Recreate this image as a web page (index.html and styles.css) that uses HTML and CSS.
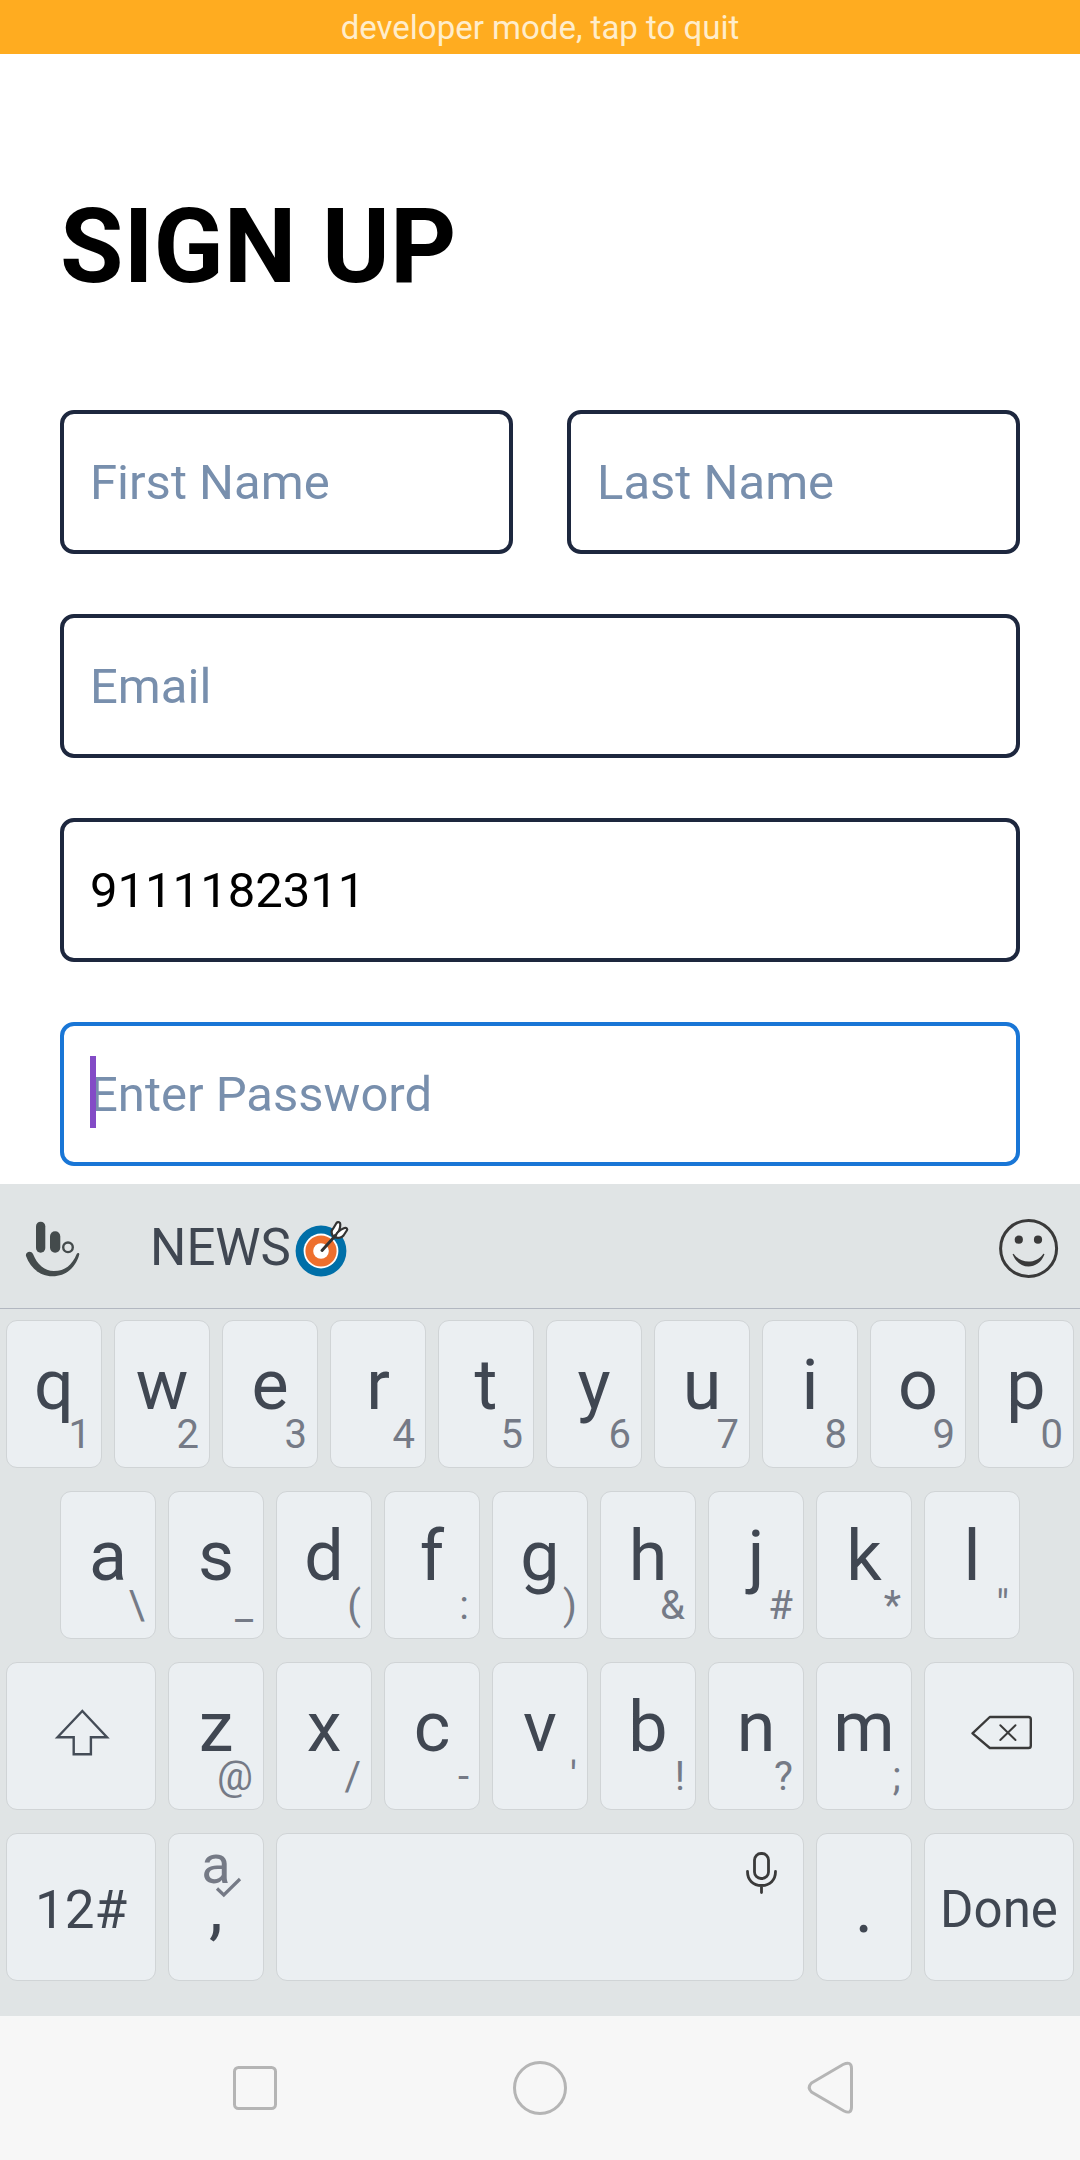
FILE: index.html
```html
<!DOCTYPE html>
<html lang="en">
<head>
<meta charset="utf-8">
<meta name="viewport" content="width=device-width, initial-scale=1">
<title>Sign up</title>
<link rel="stylesheet" href="styles.css">
</head>
<body>
<button class="dev-banner" type="button">developer mode, tap to quit</button>

<main class="signup">
  <h1 class="signup-title">SIGN UP</h1>
  <form class="signup-form">
    <div class="field-row">
      <input class="field" type="text" placeholder="First Name" aria-label="First Name">
      <input class="field" type="text" placeholder="Last Name" aria-label="Last Name">
    </div>
    <input class="field" type="email" placeholder="Email" aria-label="Email">
    <input class="field" type="tel" value="9111182311" aria-label="Phone">
    <div class="field-active">
      <input class="field field-focused" type="password" placeholder="Enter Password" aria-label="Password">
      <span class="caret"></span>
    </div>
  </form>
</main>

<section class="keyboard" aria-label="Keyboard">
  <div class="toolbar">
    <button class="tool" type="button" aria-label="Keyboard menu">
      <svg class="icon" viewBox="0 2 60 60" fill="#444b4c">
        <rect x="12" y="5.7" width="9.3" height="31" rx="4.6"/>
        <rect x="26" y="15.3" width="10.3" height="21.4" rx="5.1"/>
        <circle cx="44" cy="31.3" r="4.8" fill="none" stroke="#444b4c" stroke-width="2.4"/>
        <path d="M2 40C1 36 7 34 9 38C13 48 20 55 30 55C41 55 48 49 52.7 38C53.5 36.5 55.5 37 55.3 38.5C52 51 42 60.3 28.5 60.3C15 60.3 6 51 2 40Z"/>
      </svg>
    </button>
    <button class="tool tool-news" type="button">NEWS<svg class="icon" viewBox="0 2 60 60" aria-hidden="true">
        <circle cx="28" cy="35" r="25.4" fill="#006fa8"/>
        <circle cx="28" cy="35" r="17.4" fill="#fff"/>
        <circle cx="28" cy="35" r="15.6" fill="#ee6f2d"/>
        <circle cx="28" cy="35" r="7.8" fill="#fff"/>
        <g stroke="#333" stroke-width="2.2" stroke-linecap="round" stroke-linejoin="round">
          <path d="M40.5 20.5C37.5 17 38.5 14 40.5 12L43.5 7C45 5 47.5 6.5 47.3 8.5C47.3 13 46 16 43 19Z" fill="#fff"/>
          <path d="M43 19C45 14.5 48 13.5 51.5 12C53.5 11.5 55 13 53.8 14.5L50.5 19.5C48.5 22 44.5 22.5 41.5 21Z" fill="#fff"/>
          <path d="M29 34.5L42.5 19.5" fill="none" stroke-width="3"/>
        </g>
      </svg></button>
    <button class="tool tool-emoji" type="button" aria-label="Emoji">
      <svg class="icon" viewBox="0 2 60 60" fill="#3a3a3a">
        <circle cx="30.6" cy="32.4" r="28" fill="none" stroke="#3a3a3a" stroke-width="3"/>
        <circle cx="20.8" cy="23.7" r="4.1"/>
        <circle cx="40" cy="23.7" r="4.1"/>
        <path d="M14.7 38.5C14.5 37.5 15.5 37.5 16 38.2C23 48 38 48 45 38.2C45.5 37.5 46.7 37.5 46.3 38.8C40 54.5 21 54.5 14.7 38.5Z"/>
      </svg>
    </button>
  </div>

  <div class="keys">
    <div class="key-row">
      <button class="key" type="button"><span class="letter">q</span><span class="hint">1</span></button>
      <button class="key" type="button"><span class="letter">w</span><span class="hint">2</span></button>
      <button class="key" type="button"><span class="letter">e</span><span class="hint">3</span></button>
      <button class="key" type="button"><span class="letter">r</span><span class="hint">4</span></button>
      <button class="key" type="button"><span class="letter">t</span><span class="hint">5</span></button>
      <button class="key" type="button"><span class="letter">y</span><span class="hint">6</span></button>
      <button class="key" type="button"><span class="letter">u</span><span class="hint">7</span></button>
      <button class="key" type="button"><span class="letter">i</span><span class="hint">8</span></button>
      <button class="key" type="button"><span class="letter">o</span><span class="hint">9</span></button>
      <button class="key" type="button"><span class="letter">p</span><span class="hint">0</span></button>
    </div>
    <div class="key-row key-row-inset">
      <button class="key" type="button"><span class="letter">a</span><span class="hint">\</span></button>
      <button class="key" type="button"><span class="letter">s</span><span class="hint">_</span></button>
      <button class="key" type="button"><span class="letter">d</span><span class="hint">(</span></button>
      <button class="key" type="button"><span class="letter">f</span><span class="hint">:</span></button>
      <button class="key" type="button"><span class="letter">g</span><span class="hint">)</span></button>
      <button class="key" type="button"><span class="letter">h</span><span class="hint">&amp;</span></button>
      <button class="key" type="button"><span class="letter">j</span><span class="hint">#</span></button>
      <button class="key" type="button"><span class="letter">k</span><span class="hint">*</span></button>
      <button class="key" type="button"><span class="letter">l</span><span class="hint">"</span></button>
    </div>
    <div class="key-row">
      <button class="key key-wide" type="button" aria-label="Shift">
        <svg class="icon key-icon" viewBox="0 1 60 60" fill="none" stroke="#444c57" stroke-width="2.4">
          <path d="M31.3 6L6.5 32.3H22.7V49.3H39.9V32.3H56Z"/>
        </svg>
      </button>
      <button class="key" type="button"><span class="letter">z</span><span class="hint">@</span></button>
      <button class="key" type="button"><span class="letter">x</span><span class="hint">/</span></button>
      <button class="key" type="button"><span class="letter">c</span><span class="hint">-</span></button>
      <button class="key" type="button"><span class="letter">v</span><span class="hint">'</span></button>
      <button class="key" type="button"><span class="letter">b</span><span class="hint">!</span></button>
      <button class="key" type="button"><span class="letter">n</span><span class="hint">?</span></button>
      <button class="key" type="button"><span class="letter">m</span><span class="hint">;</span></button>
      <button class="key key-wide" type="button" aria-label="Backspace">
        <svg class="icon key-icon" viewBox="-1 0 60 60" fill="none" stroke="#3a3a3a" stroke-width="2.4" stroke-linejoin="round">
          <path d="M2.500 27.300L19.800 11H58.500Q60.800 11 60.800 13.300V39.700Q60.800 42 58.500 42H19.800Z"/>
          <path d="M30.300 19.300L45.500 34M45.500 19.300L30.300 34" stroke-width="2" stroke-linecap="round"/>
        </svg>
      </button>
    </div>
    <div class="key-row">
      <button class="key key-wide" type="button"><span class="label label-symbols">12#</span></button>
      <button class="key" type="button">
        <span class="punctuation">,</span>
        <span class="suggest">a</span>
        <svg class="suggest-check" viewBox="0 0 30 22" fill="none" stroke="#757a86" stroke-width="3.2" aria-hidden="true">
          <path d="M3 12.500L9.800 19L26 3"/>
        </svg>
      </button>
      <button class="key key-space" type="button" aria-label="Space">
        <svg class="mic" viewBox="0 0 36 46" fill="none" stroke="#3a3a3a" stroke-width="2.8" stroke-linecap="round">
          <rect x="11.500" y="3.500" width="14" height="25" rx="6.500"/>
          <path d="M4.500 21.500C4.500 30 10 35.500 18.500 35.500S32.500 30 32.500 21.500M18.500 36V42.500"/>
        </svg>
      </button>
      <button class="key" type="button"><span class="punctuation">.</span></button>
      <button class="key key-wide" type="button"><span class="label">Done</span></button>
    </div>
  </div>
</section>

<nav class="system-nav" aria-label="System">
  <button class="nav-button" type="button" aria-label="Recent apps">
    <svg class="icon" viewBox="0 0 60 60" fill="none" stroke="#b5b5b5" stroke-width="3">
      <rect x="12.500" y="9.500" width="41" height="41" rx="4"/>
    </svg>
  </button>
  <button class="nav-button" type="button" aria-label="Home">
    <svg class="icon" viewBox="0 0 60 60" fill="none" stroke="#b5b5b5" stroke-width="3">
      <circle cx="30" cy="30" r="25.500"/>
    </svg>
  </button>
  <button class="nav-button" type="button" aria-label="Back">
    <svg class="icon" viewBox="0 0 60 60" fill="none" stroke="#b5b5b5" stroke-width="3">
      <path d="M13.500 25L45 6.500Q53.500 2.500 53.500 10.500V49Q53.500 56.500 46 53L13.500 34Q9 29.500 13.500 25Z"/>
    </svg>
  </button>
</nav>
</body>
</html>
```

FILE: styles.css
```css
* {
  box-sizing: border-box;
}

body {
  margin: 0;
  min-height: 100vh;
  display: flex;
  flex-direction: column;
  background: #fff;
  font-family: Roboto, "Liberation Sans", sans-serif;
}

button {
  margin: 0;
  padding: 0;
  border: 0;
  background: none;
  font: inherit;
  color: inherit;
}

.icon {
  display: block;
  width: 60px;
  height: 60px;
  overflow: visible;
}

.dev-banner {
  width: 100%;
  padding-top: 2px;
  background: #ffac20;
  color: #ffedcb;
  font-size: 33px;
  line-height: 52px;
  text-align: center;
}

.signup {
  flex: 1;
  padding: 133px 60px 18px;
}

.signup-title {
  margin: 0 0 103px;
  font-size: 103px;
  line-height: 120px;
  font-weight: 700;
  color: #000;
}

.signup-form {
  display: flex;
  flex-direction: column;
  gap: 60px;
}

.field-row {
  display: grid;
  grid-template-columns: 1fr 1fr;
  gap: 54px;
}

.field {
  width: 100%;
  min-width: 0;
  height: 144px;
  padding: 0 26px;
  border: 4px solid #1d273e;
  border-radius: 14px;
  background: #fff;
  font: inherit;
  font-size: 49px;
  color: #000;
  outline: none;
}

.field::placeholder {
  color: #788fad;
  opacity: 1;
}

.field-active {
  position: relative;
  display: flex;
}

.field-focused {
  border-color: #1976d6;
}

.caret {
  position: absolute;
  left: 30px;
  top: 34px;
  width: 6px;
  height: 72px;
  background: #834bc6;
}

.keyboard {
  background: #e0e4e5;
  color: #404752;
}

.toolbar {
  display: flex;
  align-items: center;
  height: 125px;
  padding: 4px 22px 0 24px;
  border-bottom: 1px solid #b2b7c0;
}

.tool-news {
  display: flex;
  align-items: center;
  gap: 2px;
  margin-left: 66px;
  font-size: 51px;
  line-height: 60px;
}

.tool-emoji {
  margin-left: auto;
}

.keys {
  display: flex;
  flex-direction: column;
  gap: 23px;
  padding: 11px 6px 35px;
}

.key-row {
  display: flex;
  gap: 12px;
}

.key-row-inset {
  padding: 0 54px;
}

/* Growth shares leave out the 2px that each key's borders add. */
.key {
  position: relative;
  flex: 94 1 0;
  min-width: 0;
  height: 148px;
  display: grid;
  align-items: start;
  justify-items: center;
  border: 1px solid #d0d4d6;
  border-radius: 11px;
  background: #ebeff2;
}

.key > * {
  grid-area: 1 / 1;
}

.key-wide {
  flex-grow: 148;
}

.key-space {
  flex-grow: 526;
}

.letter {
  font-size: 70px;
  line-height: 128px;
}

.hint {
  align-self: end;
  justify-self: end;
  padding: 0 10px 8px 0;
  font-size: 40px;
  line-height: 48px;
  color: #757a86;
}

.key-icon {
  align-self: center;
}

.label {
  font-size: 51px;
  line-height: 152px;
}

.label-symbols {
  font-size: 53px;
}

.punctuation {
  font-size: 70px;
  line-height: 148px;
}

.suggest {
  font-size: 54px;
  line-height: 62px;
  color: #757a86;
}

.suggest-check {
  position: absolute;
  left: 45px;
  top: 42px;
  width: 30px;
  height: 22px;
}

.mic {
  justify-self: end;
  width: 36px;
  height: 46px;
  margin: 16px 24px 0 0;
}

.system-nav {
  display: grid;
  grid-template-columns: repeat(3, 1fr);
  align-items: center;
  justify-items: center;
  height: 144px;
  padding: 0 10%;
  background: #f7f7f7;
}
```
